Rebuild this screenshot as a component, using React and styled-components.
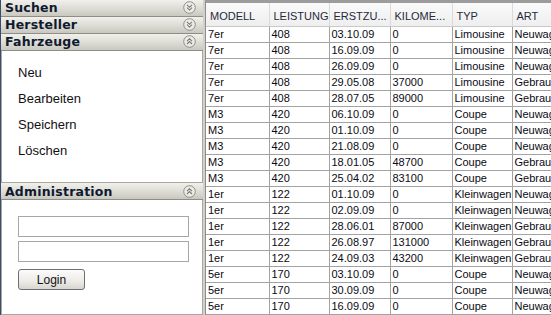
import React from "react";
import styled, { createGlobalStyle } from "styled-components";

const GlobalStyle = createGlobalStyle`
  html, body {
    margin: 0;
    padding: 0;
    background: #ffffff;
  }
  #root {
    width: 551px;
    height: 315px;
    overflow: hidden;
  }
`;

const Page = styled.div`
  display: flex;
  width: 551px;
  height: 315px;
  background: #d4d0c8;
`;

const Accordion = styled.div`
  display: flex;
  flex-direction: column;
  width: 203px;
  height: 315px;
  background: #ffffff;
  border-left: 1px solid #3c4a72;
  box-sizing: border-box;
`;

const PanelHeader = styled.div`
  display: flex;
  align-items: center;
  justify-content: space-between;
  height: 16px;
  padding: 0 7px 0 4px;
  border-bottom: 1px solid #8e8d86;
  background: linear-gradient(#f1f0ec, #dcdbd4 55%, #c9c8c0);
  font-family: "DejaVu Sans", Verdana, sans-serif;
  font-size: 12.5px;
  font-weight: bold;
  letter-spacing: 0.2px;
  color: #0f1a2e;
`;

const PanelBody = styled.div`
  display: flex;
  flex-direction: column;
  height: ${(p) => p.h}px;
  box-sizing: border-box;
  border-left: 1px solid #a9a89f;
  border-right: 1px solid #a9a89f;
  border-bottom: 1px solid #a9a89f;
  background: #ffffff;
  padding: ${(p) => p.pad};
`;

const MenuItem = styled.div`
  height: 26px;
  line-height: 26px;
  font-family: "Liberation Sans", Arial, sans-serif;
  font-size: 13px;
  color: #111111;
`;

const Field = styled.input`
  width: 171px;
  height: 21px;
  box-sizing: border-box;
  border: 1px solid #a7a7a7;
  margin: 0 0 4px 0;
  padding: 0 3px;
  outline: none;
`;

const LoginButton = styled.button`
  margin-top: 3px;
  width: 67px;
  height: 21px;
  border: 1px solid #6f6f6f;
  border-radius: 3px;
  background: linear-gradient(#fbfbfb, #ecebe6 60%, #d6d5cf);
  font-family: "Liberation Sans", Arial, sans-serif;
  font-size: 12px;
  color: #111111;
  padding: 0;
`;

const Toggle = ({ up }) => (
  <svg width="13" height="13" viewBox="0 0 13 13">
    <circle cx="6.5" cy="6.5" r="5.8" fill="#ecebe6" stroke="#8f8f8a" strokeWidth="1" />
    <path
      d={up ? "M4 6.2 L6.5 3.8 L9 6.2 M4 9 L6.5 6.6 L9 9" : "M4 3.9 L6.5 6.3 L9 3.9 M4 6.7 L6.5 9.1 L9 6.7"}
      fill="none"
      stroke="#7a7a76"
      strokeWidth="1.1"
    />
  </svg>
);

const GridWrap = styled.div`
  flex: 1;
  margin-left: 2px;
  background: #ffffff;
  border-left: 1px solid #8c8c8c;
  border-top: 3px solid #9c9c9c;
  overflow: hidden;
`;

const Table = styled.table`
  border-collapse: collapse;
  table-layout: fixed;
  width: 396px;
`;

const HeadCell = styled.th`
  width: ${(p) => p.w}px;
  height: 23px;
  padding: 3px 0 0 4px;
  text-align: left;
  font-weight: normal;
  font-family: "Liberation Sans", Arial, sans-serif;
  font-size: 11px;
  color: #1f2a3a;
  background: linear-gradient(#fafafa, #eeeeee);
  border-right: 1px solid #dadada;
  border-bottom: 1px solid #c9c9c9;
  white-space: nowrap;
  box-sizing: border-box;
`;

const Cell = styled.td`
  height: 15px;
  padding: 0 0 0 2px;
  border: 1px solid #a3a3a3;
  border-top: none;
  border-left: ${(p) => (p.first ? "none" : "1px solid #a3a3a3")};
  font-family: "Liberation Sans", Arial, sans-serif;
  font-size: 11px;
  color: #0a0a14;
  white-space: nowrap;
  overflow: hidden;
  line-height: 15px;
`;

const columns = [
  { label: "MODELL", w: 63 },
  { label: "LEISTUNG", w: 60 },
  { label: "ERSTZU...", w: 61 },
  { label: "KILOME...", w: 62 },
  { label: "TYP", w: 60 },
  { label: "ART", w: 90 },
];

const rows = [
  ["7er", "408", "03.10.09", "0", "Limousine", "Neuwagen"],
  ["7er", "408", "16.09.09", "0", "Limousine", "Neuwagen"],
  ["7er", "408", "26.09.09", "0", "Limousine", "Neuwagen"],
  ["7er", "408", "29.05.08", "37000", "Limousine", "Gebrauchtwagen"],
  ["7er", "408", "28.07.05", "89000", "Limousine", "Gebrauchtwagen"],
  ["M3", "420", "06.10.09", "0", "Coupe", "Neuwagen"],
  ["M3", "420", "01.10.09", "0", "Coupe", "Neuwagen"],
  ["M3", "420", "21.08.09", "0", "Coupe", "Neuwagen"],
  ["M3", "420", "18.01.05", "48700", "Coupe", "Gebrauchtwagen"],
  ["M3", "420", "25.04.02", "83100", "Coupe", "Gebrauchtwagen"],
  ["1er", "122", "01.10.09", "0", "Kleinwagen", "Neuwagen"],
  ["1er", "122", "02.09.09", "0", "Kleinwagen", "Neuwagen"],
  ["1er", "122", "28.06.01", "87000", "Kleinwagen", "Gebrauchtwagen"],
  ["1er", "122", "26.08.97", "131000", "Kleinwagen", "Gebrauchtwagen"],
  ["1er", "122", "24.09.03", "43200", "Kleinwagen", "Gebrauchtwagen"],
  ["5er", "170", "03.10.09", "0", "Coupe", "Neuwagen"],
  ["5er", "170", "30.09.09", "0", "Coupe", "Neuwagen"],
  ["5er", "170", "16.09.09", "0", "Coupe", "Neuwagen"],
];

export default function App() {
  return (
    <>
      <GlobalStyle />
      <Page>
        <Accordion>
          <PanelHeader>
            Suchen <Toggle />
          </PanelHeader>
          <PanelHeader>
            Hersteller <Toggle />
          </PanelHeader>
          <PanelHeader>
            Fahrzeuge <Toggle up />
          </PanelHeader>
          <PanelBody h={133} pad="9px 0 0 16px">
            <MenuItem>Neu</MenuItem>
            <MenuItem>Bearbeiten</MenuItem>
            <MenuItem>Speichern</MenuItem>
            <MenuItem>Löschen</MenuItem>
          </PanelBody>
          <PanelHeader>
            Administration <Toggle up />
          </PanelHeader>
          <PanelBody h={115} pad="16px 0 0 16px">
            <Field />
            <Field />
            <LoginButton>Login</LoginButton>
          </PanelBody>
        </Accordion>
        <GridWrap>
          <Table>
            <thead>
              <tr>
                {columns.map((c) => (
                  <HeadCell key={c.label} w={c.w}>
                    {c.label}
                  </HeadCell>
                ))}
              </tr>
            </thead>
            <tbody>
              {rows.map((r, i) => (
                <tr key={i}>
                  {r.map((v, j) => (
                    <Cell key={j} first={j === 0}>
                      {v}
                    </Cell>
                  ))}
                </tr>
              ))}
            </tbody>
          </Table>
        </GridWrap>
      </Page>
    </>
  );
}
